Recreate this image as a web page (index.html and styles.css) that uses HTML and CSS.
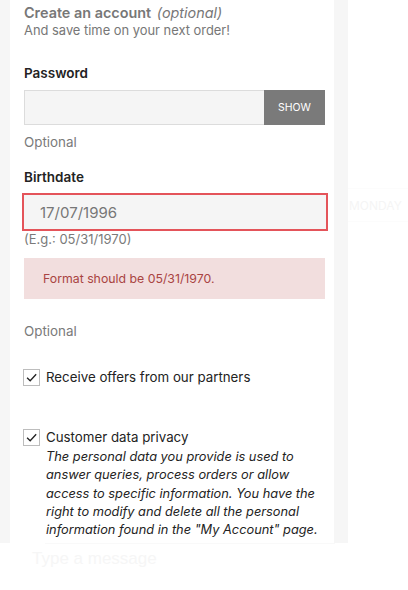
FILE: index.html
```html
<!DOCTYPE html>
<html>
<head>
<meta charset="utf-8">
<link rel="stylesheet" href="styles.css">
</head>
<body>
<div class="top">
  <div class="rail">
    <div class="card">
      <div class="heading">Create an account <span class="opt">(optional)</span></div>
      <div class="sub">And save time on your next order!</div>

      <div class="label label-pw">Password</div>
      <div class="pw-row">
        <div class="pw-input"></div>
        <div class="show">SHOW</div>
      </div>
      <div class="hint hint-pw">Optional</div>

      <div class="label label-bd">Birthdate</div>
      <div class="bd-input">17/07/1996</div>
      <div class="example">(E.g.: 05/31/1970)</div>
      <div class="error">Format should be 05/31/1970.</div>
      <div class="hint hint-bd">Optional</div>

      <div class="check check-1">
        <span class="box"><svg viewBox="0 0 17 17" width="17" height="17"><path d="M3.5 8.8 L7 12.2 L13.8 4.8" fill="none" stroke="#232323" stroke-width="1.5"/></svg></span>
        <span class="check-text">Receive offers from our partners</span>
      </div>

      <div class="check check-2">
        <span class="box"><svg viewBox="0 0 17 17" width="17" height="17"><path d="M3.5 8.8 L7 12.2 L13.8 4.8" fill="none" stroke="#232323" stroke-width="1.5"/></svg></span>
        <div class="check-body">
          <div class="check-text">Customer data privacy</div>
          <p class="privacy">The personal data you provide is used to answer queries, process orders or allow access to specific information. You have the right to modify and delete all the personal information found in the "My Account" page.</p>
        </div>
      </div>
    </div>
  </div>
  <div class="side">
    <div class="day">MONDAY</div>
  </div>
</div>
<div class="composer">
  <div class="composer-input">Type a message</div>
</div>
</body>
</html>
```
FILE: styles.css
```css
* { box-sizing: border-box; }
html, body { margin: 0; padding: 0; background: #fff; }
body {
  width: 408px;
  height: 590px;
  overflow: hidden;
  font-family: "Inter", "Noto Sans", sans-serif;
  color: #232323;
}
.top {
  display: flex;
  height: 543px;
}
.rail {
  width: 348px;
  flex: none;
  background: #f6f6f6;
  padding: 0 14px 0 10px;
}
.card {
  background: #fff;
  height: 100%;
  padding: 4px 9px 0 14px;
}
.heading {
  font-size: 14.4px;
  font-weight: 600;
  color: #777;
  line-height: 18px;
}
.opt { font-weight: 400; font-style: italic; margin-left: 2px; }
.sub {
  font-size: 12.9px;
  color: #777;
  line-height: 18px;
}
.label {
  font-size: 13.5px;
  font-weight: 600;
  color: #232323;
  line-height: 18px;
}
.label-pw { margin-top: 24px; }
.pw-row {
  display: flex;
  margin-top: 8px;
  height: 35px;
}
.pw-input {
  flex: 1;
  background: #f5f5f5;
  border: 1px solid #dcdcdc;
  border-right: none;
}
.show {
  width: 61px;
  background: #7a7a7a;
  color: #fff;
  font-size: 10.5px;
  display: flex;
  align-items: center;
  justify-content: center;
}
.hint {
  font-size: 13.4px;
  color: #7a7a7a;
  line-height: 18px;
}
.hint-pw { margin-top: 8px; }
.label-bd { margin-top: 17px; }
.bd-input {
  margin: 7px -3px 0 -2px;
  height: 38px;
  border: 2px solid #e4545a;
  background: #f5f5f5;
  color: #777;
  font-size: 15px;
  padding-left: 16px;
  display: flex;
  align-items: center;
}
.example {
  font-size: 13px;
  color: #7a7a7a;
  line-height: 16px;
}
.error {
  margin-top: 11px;
  height: 41px;
  background: #f2dede;
  color: #a94442;
  font-size: 12.3px;
  padding-left: 19px;
  display: flex;
  align-items: center;
}
.hint-bd { margin-top: 23px; }
.check {
  display: flex;
  align-items: flex-start;
  gap: 6px;
}
.check-1 { margin-top: 29px; margin-left: -1px; }
.check-2 { margin-top: 43px; margin-left: -1px; }
.box {
  width: 17px;
  height: 17px;
  border: 1px solid #bdbdbd;
  flex: none;
  display: flex;
  align-items: center;
  justify-content: center;
}
.box svg { display: block; width: 15px; height: 15px; }
.check-text {
  font-size: 13.3px;
  line-height: 17px;
  color: #232323;
}
.check-body { flex: 1; }
.privacy {
  margin: 2px 0 0;
  font-size: 12.8px;
  font-style: italic;
  line-height: 18.3px;
  color: #232323;
}
.side {
  flex: 1;
}
.day {
  margin-top: 188px;
  height: 34px;
  border-top: 1px solid #fcfcfc;
  border-bottom: 1px solid #fcfcfc;
  color: #f5f5f5;
  font-size: 12px;
  padding-left: 1px;
  display: flex;
  align-items: center;
}
.composer {
  margin-left: 45px;
  width: 290px;
  border-top: 1px solid #f9f9f9;
}
.composer-input {
  margin-left: -13px;
  padding-top: 5px;
  font-family: "Liberation Sans", sans-serif;
  font-size: 17px;
  color: #f6f6f6;
}
```
